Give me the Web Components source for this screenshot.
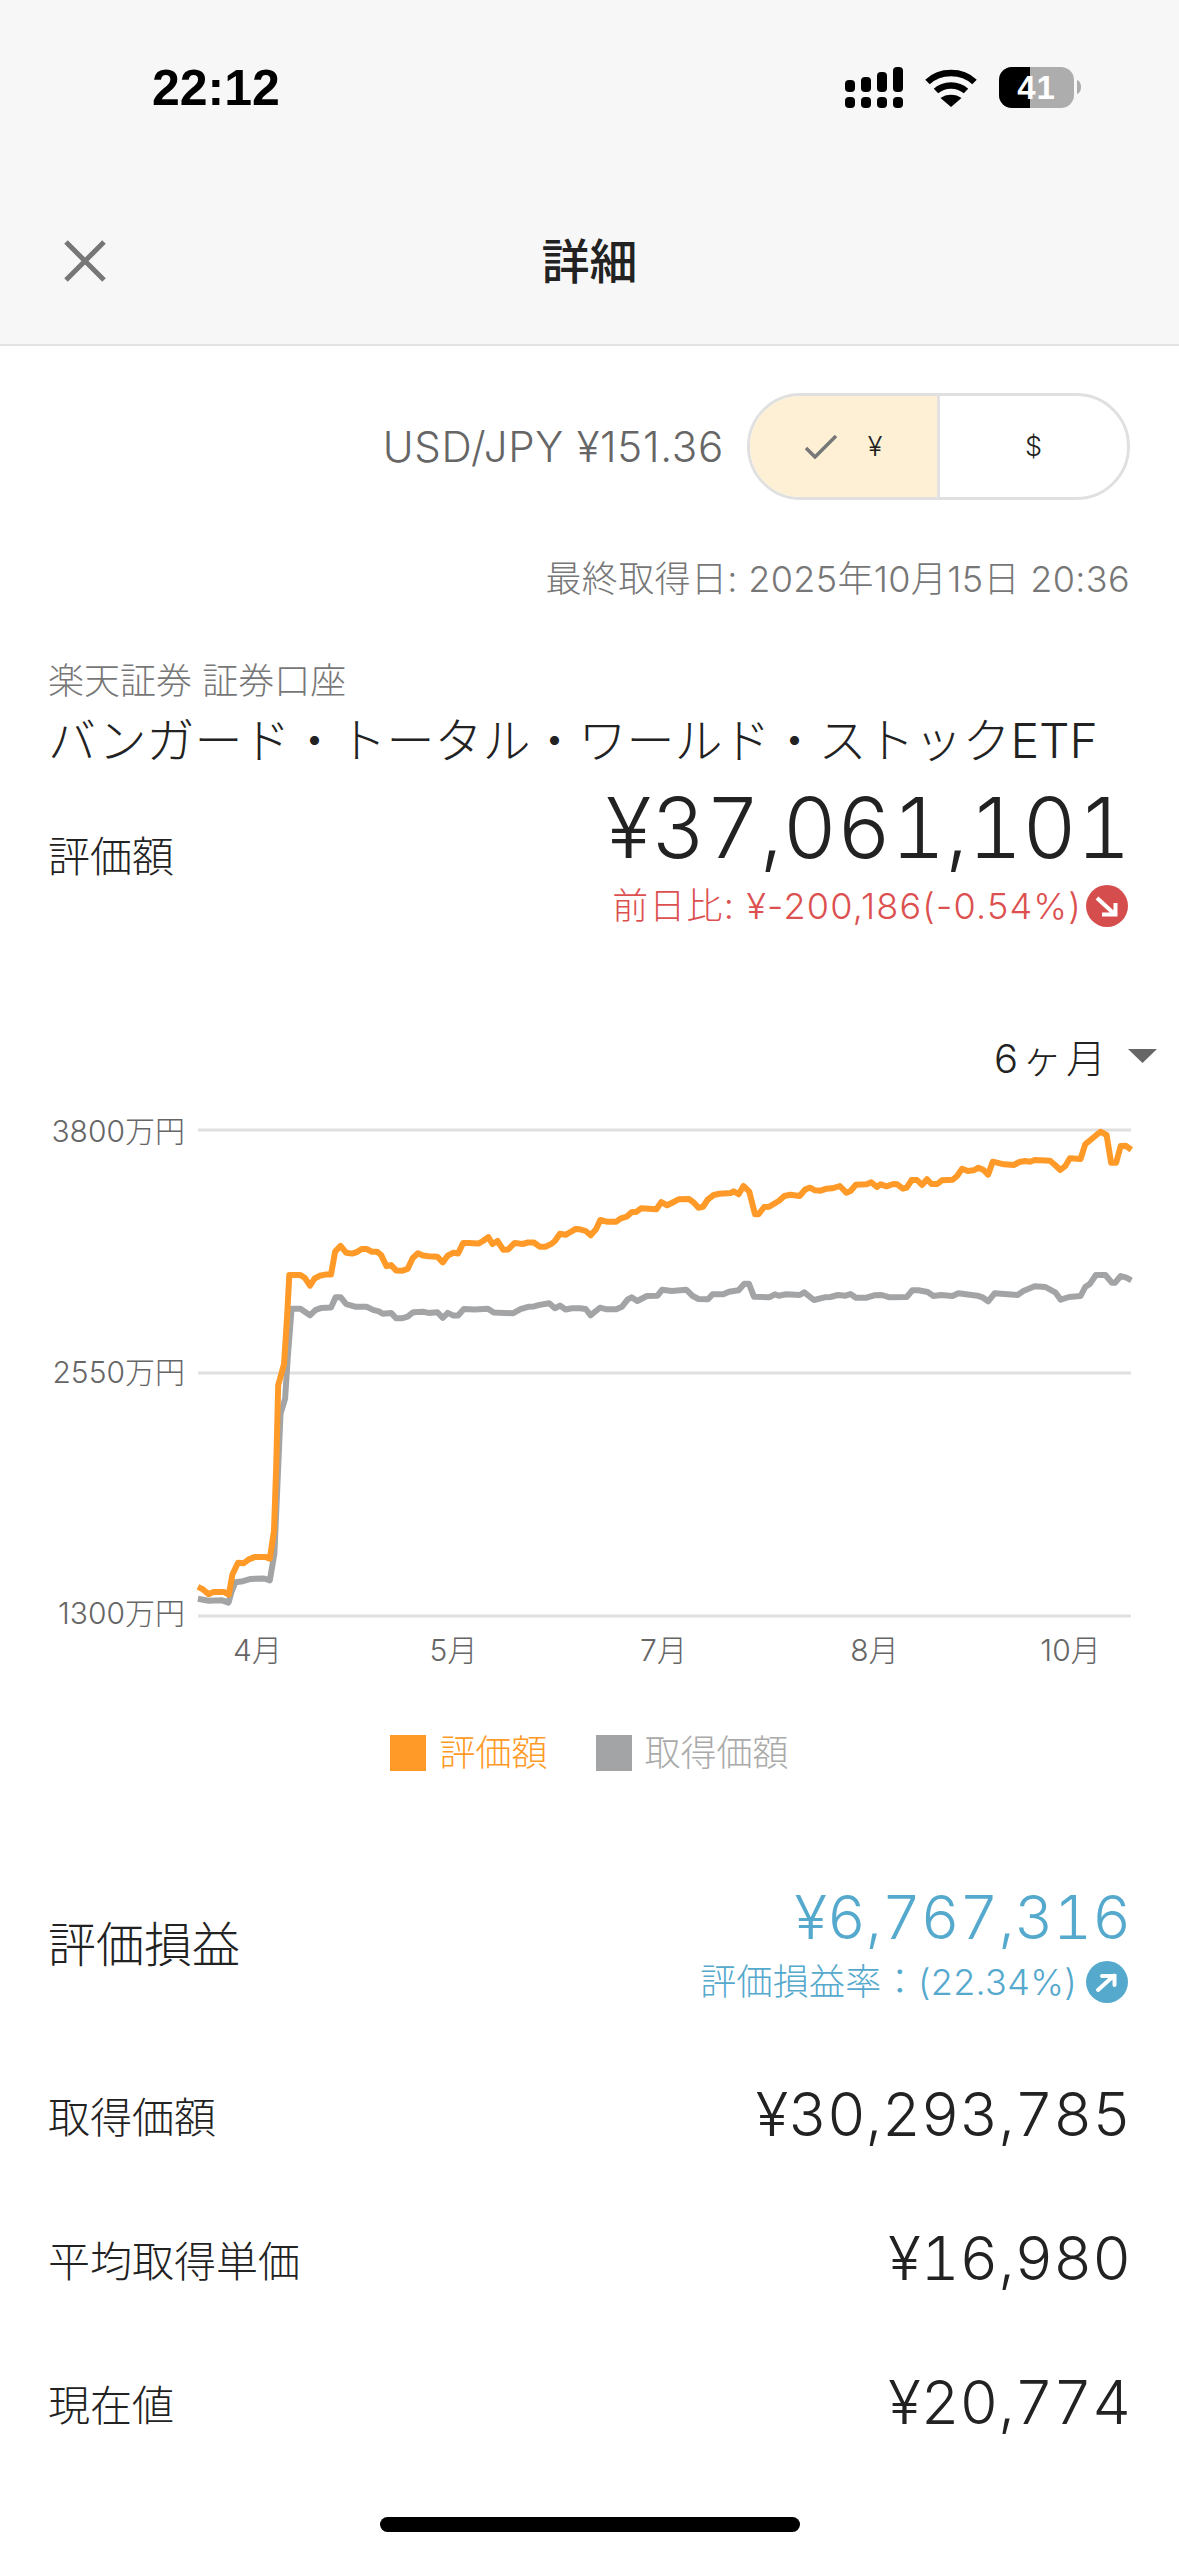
<!DOCTYPE html>
<html lang="ja">
<head>
<meta charset="UTF-8">
<title>詳細</title>
<style>
  html, body { margin: 0; background: #fff; }
  body { width: 1179px; height: 2556px; overflow: hidden; font-family: Inter, "Noto Sans CJK JP", sans-serif; color: #222; }
  app-screen { display: flex; flex-direction: column; height: 2556px; }
</style>
</head>
<body>
<app-screen>
  <status-bar></status-bar>
  <nav-header>詳細</nav-header>
  <rate-bar></rate-bar>
  <holding-head></holding-head>
  <price-chart></price-chart>
  <detail-row label="評価損益" value="¥6,767,316" kind="gain"></detail-row>
  <detail-row label="取得価額" value="¥30,293,785"></detail-row>
  <detail-row label="平均取得単価" value="¥16,980"></detail-row>
  <detail-row label="現在値" value="¥20,774"></detail-row>
  <home-bar></home-bar>
</app-screen>

<script>
  const JP = 'Inter, "Noto Sans CJK JP", sans-serif';

  class StatusBar extends HTMLElement {
    constructor() {
      super();
      this.attachShadow({ mode: 'open' });
      this.shadowRoot.innerHTML = `
        <style>
          :host { display: flex; height: 198px; background: #f7f7f7; box-sizing: border-box; padding: 67px 98px 0 152px; justify-content: space-between; align-items: flex-start; font-family: "Liberation Sans", sans-serif; }
          .time { font-size: 50px; font-weight: 700; line-height: 43px; color: #000; }
          .icons { display: flex; align-items: flex-start; gap: 22px; }
          svg { display: block; }
          .batt { position: relative; width: 82px; height: 41px; }
          .batt span { position: absolute; left: 0; width: 75px; top: 0; line-height: 42px; text-align: center; color: #fff; font-size: 33px; font-weight: 700; letter-spacing: 1px; }
        </style>
        <div class="time">22:12</div>
        <div class="icons">
          <svg width="58" height="41" viewBox="0 0 58 41" fill="#000">
            <rect x="0" y="13" width="10" height="12" rx="4"/><rect x="16" y="10" width="10" height="15" rx="4"/><rect x="32" y="5" width="10" height="20" rx="4"/><rect x="48" y="0" width="10" height="25" rx="4"/>
            <rect x="0" y="30" width="10" height="11" rx="4"/><rect x="16" y="30" width="10" height="11" rx="4"/><rect x="32" y="30" width="10" height="11" rx="4"/><rect x="48" y="30" width="10" height="11" rx="4"/>
          </svg>
          <svg width="52" height="41" viewBox="0 0 52 41" fill="none" stroke="#000" stroke-width="6.5">
            <path d="M2.5 15 C15 3 37 3 49.5 15"/><path d="M11 24 C19 16.5 33 16.5 41 24"/>
            <path d="M15.5 31 C21 26.5 31 26.5 36.5 31 L26 40 Z" fill="#000" stroke="none"/>
          </svg>
          <div class="batt">
            <svg width="82" height="41" viewBox="0 0 82 41">
              <defs><clipPath id="b"><rect width="75" height="41" rx="13"/></clipPath></defs>
              <g clip-path="url(#b)"><rect width="75" height="41" fill="#adadad"/><rect width="31" height="41" fill="#000"/></g>
              <path d="M78 13 C81 14 82 17 82 20 C82 23 81 26 78 27 Z" fill="#adadad"/>
            </svg>
            <span>41</span>
          </div>
        </div>`;
    }
  }

  class NavHeader extends HTMLElement {
    constructor() {
      super();
      this.attachShadow({ mode: 'open' });
      this.shadowRoot.innerHTML = `
        <style>
          :host { display: grid; grid-template-columns: 1fr auto 1fr; align-items: center; height: 148px; box-sizing: border-box; background: #f7f7f7; border-bottom: 2px solid #e2e2e2; padding: 0 64px 21px 64px; }
          .t { font: 500 48px/1 "Noto Sans CJK JP", sans-serif; color: #222; margin-bottom: 6px; }
          svg { display: block; }
        </style>
        <svg width="42" height="42" viewBox="0 0 42 42" stroke="#777" stroke-width="5"><path d="M2 2 L40 40 M40 2 L2 40"/></svg>
        <div class="t"><slot></slot></div>
        <div></div>`;
    }
  }

  class RateBar extends HTMLElement {
    constructor() {
      super();
      this.attachShadow({ mode: 'open' });
      this.shadowRoot.innerHTML = `
        <style>
          :host { display: flex; flex-direction: column; align-items: flex-end; padding: 47px 49px 0 0; font-family: ${JP}; }
          .top { display: flex; align-items: center; gap: 23px; }
          .rate { font-size: 42px; letter-spacing: .75px; color: #666; font-weight: 300; }
          .toggle { display: grid; grid-template-columns: 190px 1fr; width: 383px; height: 107px; box-sizing: border-box; border: 3px solid #e0e0e0; border-radius: 54px; overflow: hidden; }
          .on { background: #fdf0d5; border-right: 3px solid #e2e2e2; display: flex; align-items: center; justify-content: center; gap: 31px; }
          .off { display: flex; align-items: center; justify-content: center; }
          .cur { font-size: 27px; color: #222; font-weight: 300; }
          .date { margin-top: 58px; font-size: 36px; letter-spacing: .35px; line-height: 42px; color: #777; font-weight: 300; }
        </style>
        <div class="top">
          <div class="rate">USD/JPY ¥151.36</div>
          <div class="toggle">
            <div class="on">
              <svg width="32" height="24" viewBox="0 0 32 24" fill="none" stroke="#777" stroke-width="3.5"><path d="M1 13 L10 22 L31 1"/></svg>
              <span class="cur">¥</span>
            </div>
            <div class="off"><span class="cur">$</span></div>
          </div>
        </div>
        <div class="date">最終取得日: 2025年10月15日 20:36</div>`;
    }
  }

  class HoldingHead extends HTMLElement {
    constructor() {
      super();
      this.attachShadow({ mode: 'open' });
      this.shadowRoot.innerHTML = `
        <style>
          :host { display: block; padding: 60px 49px 0 48px; font-family: ${JP}; }
          .broker { font-size: 36px; line-height: 42px; color: #777; font-weight: 300; }
          .name { font-size: 48px; line-height: 56px; margin-top: 11px; color: #222; font-weight: 300; white-space: nowrap; }
          .val { display: flex; justify-content: space-between; align-items: flex-start; margin-top: 13px; }
          .lab { font-size: 42px; line-height: 50px; font-weight: 300; margin-top: 50px; }
          .amt { font-size: 83.6px; line-height: 92px; font-weight: 300; letter-spacing: .2px; margin-right: -1px; font-variant-numeric: tabular-nums; }
          .diff { display: flex; justify-content: flex-end; align-items: center; gap: 4px; margin-right: 2px; color: #dc5050; font-size: 36px; letter-spacing: 1.2px; line-height: 42px; font-weight: 300; margin-top: 3px; }
          .dot { width: 42px; height: 42px; border-radius: 50%; background: #d64d4d; display: block; }
          svg { display: block; }
        </style>
        <div class="broker">楽天証券 証券口座</div>
        <div class="name">バンガード・トータル・ワールド・ストックETF</div>
        <div class="val"><div class="lab">評価額</div><div class="amt">¥37,061,101</div></div>
        <div class="diff"><span>前日比: ¥-200,186(-0.54%)</span><span class="dot">
          <svg width="42" height="42" viewBox="0 0 42 42" fill="none" stroke="#fff" stroke-width="4"><path d="M11 13 L29 29.5 M16 29.5 H29.5 V18"/></svg></span></div>`;
    }
  }

  // points read off the reference, left part and right part
  const toLeft = (x, y) => [x / 2.613, 1080 + y / 2.613];
  const toRight = (x, y) => [580 + x / 2.617, 1100 + y / 3];
  const orangeL = [[517,1322],[530,1328],[545,1341],[558,1335],[585,1335],[598,1342],[607,1290],[622,1259],[637,1260],[650,1250],[665,1244],[695,1244],[705,1248],[716,1175],[722,1000],[727,795],[742,740],[750,620],[756,507],[785,507],[797,515],[810,535],[822,516],[835,509],[850,506],[865,506],[876,445],[890,431],[905,449],[920,451],[932,447],[945,439],[958,439],[972,446],[985,446],[996,455],[1010,484],[1022,481],[1035,495],[1050,496],[1065,491],[1078,463],[1092,450],[1105,456],[1120,458],[1143,459],[1157,474],[1170,456],[1185,449],[1197,451],[1210,423],[1225,423],[1250,425],[1262,418],[1276,408],[1287,426],[1300,418],[1315,441],[1328,440],[1345,423],[1365,426],[1380,422],[1395,422],[1410,433],[1425,433],[1442,425],[1450,418],[1463,399],[1478,402],[1490,395],[1503,387]];
  const orangeR = [[0,385],[15,390],[28,403],[42,385],[53,357],[70,362],[95,362],[107,352],[122,347],[135,334],[148,332],[160,322],[200,325],[213,303],[228,313],[240,306],[258,295],[285,294],[298,305],[310,320],[322,317],[335,295],[350,282],[365,278],[395,276],[402,271],[415,280],[428,255],[443,272],[458,340],[467,340],[482,318],[495,317],[508,308],[520,300],[535,285],[550,281],[575,285],[590,265],[602,260],[615,268],[630,269],[645,263],[660,262],[680,255],[697,275],[708,270],[722,251],[750,250],[762,244],[777,258],[787,250],[802,256],[820,249],[830,250],[845,263],[855,260],[868,237],[882,237],[895,252],[908,235],[920,249],[935,249],[947,238],[975,236],[987,225],[1000,203],[1015,210],[1030,208],[1043,200],[1056,207],[1068,221],[1080,182],[1110,190],[1135,192],[1150,183],[1165,180],[1178,182],[1190,177],[1230,179],[1243,192],[1257,207],[1270,195],[1282,172],[1310,174],[1322,130],[1335,118],[1362,92],[1378,102],[1390,185],[1403,185],[1415,135],[1428,134],[1443,146]];
  const greyL = [[517,1353],[545,1358],[580,1357],[597,1363],[605,1335],[615,1310],[635,1307],[655,1301],[690,1300],[705,1305],[717,1235],[725,1050],[733,870],[745,830],[752,720],[762,595],[785,595],[810,612],[825,598],[840,593],[865,592],[877,565],[890,565],[905,583],[930,590],[958,590],[975,598],[990,602],[1000,608],[1022,606],[1035,620],[1050,620],[1065,616],[1080,604],[1105,603],[1120,606],[1143,604],[1157,619],[1170,606],[1185,613],[1197,613],[1212,596],[1240,597],[1275,595],[1290,605],[1340,607],[1360,596],[1380,590],[1395,589],[1410,585],[1435,581],[1450,594],[1463,587],[1478,597],[1495,594]];
  const greyR = [[0,622],[15,624],[28,643],[52,620],[70,625],[95,625],[110,617],[125,595],[135,589],[150,600],[175,585],[203,584],[215,566],[240,570],[278,566],[295,585],[310,594],[335,595],[347,580],[375,580],[390,572],[415,568],[430,548],[442,548],[455,587],[495,589],[510,580],[520,584],[540,580],[575,582],[587,574],[612,597],[640,589],[655,588],[675,582],[695,584],[708,579],[722,590],[750,590],[770,583],[790,582],[810,589],[855,588],[870,568],[885,568],[910,573],[925,585],[945,582],[975,585],[990,577],[1040,584],[1055,590],[1068,601],[1085,577],[1145,582],[1160,570],[1190,556],[1218,558],[1245,575],[1258,596],[1280,588],[1310,585],[1322,558],[1335,548],[1350,522],[1375,522],[1392,545],[1400,545],[1415,525],[1430,530],[1443,538]];

  // svg origin sits at page y 1090
  const pts = (l, r) => l.map(p => toLeft(p[0], p[1])).concat(r.map(p => toRight(p[0], p[1])))
    .map(p => p[0].toFixed(1) + ',' + (p[1] - 1090).toFixed(1)).join(' ');

  class PriceChart extends HTMLElement {
    constructor() {
      super();
      this.attachShadow({ mode: 'open' });
      const yLabels = [['3800万円', 42], ['2550万円', 283], ['1300万円', 524]];
      const grid = [39, 282, 525];
      const xLabels = [['4月', 257.5], ['5月', 453.5], ['7月', 663.5], ['8月', 874.5], ['10月', 1070.5]];
      this.shadowRoot.innerHTML = `
        <style>
          :host { display: block; font-family: ${JP}; }
          .range { display: flex; justify-content: flex-end; align-items: center; gap: 18px; padding: 108px 22px 0 0; height: 42px; font-size: 40px; letter-spacing: 4px; font-weight: 300; }
          svg.chart { display: block; margin-top: 14px; }
          svg.chart text { font-size: 30px; font-weight: 300; fill: #666; }
          .legend { display: flex; justify-content: center; gap: 48px; margin-top: 54px; font-size: 36px; font-weight: 300; line-height: 36px; }
          .item { display: flex; align-items: center; gap: 13px; }
          .sw { width: 36px; height: 36px; }
        </style>
        <div class="range"><span>6ヶ月</span>
          <svg width="29" height="14" viewBox="0 0 29 14"><path d="M0 0 H29 L14.5 14 Z" fill="#666"/></svg></div>
        <svg class="chart" width="1179" height="590" viewBox="0 0 1179 590">
          ${grid.map(y => `<rect x="198" y="${y - 1.5}" width="933" height="3" fill="#e0e0e0"/>`).join('')}
          ${yLabels.map(l => `<text x="185" y="${l[1] + 9}" text-anchor="end">${l[0]}</text>`).join('')}
          ${xLabels.map(l => `<text x="${l[1]}" y="570" text-anchor="middle">${l[0]}</text>`).join('')}
          <polyline points="${pts(greyL, greyR)}" fill="none" stroke="#a3a4a6" stroke-width="6" stroke-linejoin="round"/>
          <polyline points="${pts(orangeL, orangeR)}" fill="none" stroke="#ff9a28" stroke-width="6" stroke-linejoin="round"/>
        </svg>
        <div class="legend">
          <div class="item" style="color:#ff9a28"><span class="sw" style="background:#ff9a28"></span>評価額</div>
          <div class="item" style="color:#aaa"><span class="sw" style="background:#a3a4a6"></span>取得価額</div>
        </div>`;
    }
  }

  class DetailRow extends HTMLElement {
    constructor() {
      super();
      this.attachShadow({ mode: 'open' });
      const gain = this.getAttribute('kind') === 'gain';
      this.shadowRoot.innerHTML = `
        <style>
          :host { display: flex; justify-content: space-between; align-items: center; height: 144px; padding: 0 49px 0 48px; font-family: ${JP}; font-weight: 300; }
          :host([kind="gain"]) { height: 202px; margin-top: 69px; }
          .lab { font-size: 42px; }
          :host([kind="gain"]) .lab { font-size: 48px; }
          .right { display: flex; flex-direction: column; align-items: flex-end; }
          :host([kind="gain"]) .right { padding-top: 5px; }
          .val { font-size: 60px; line-height: 66px; margin-right: -1px; font-variant-numeric: tabular-nums; }
          :host([kind="gain"]) .val { color: #55a9cd; }
          .sub { display: flex; align-items: center; gap: 9px; margin: 10px 2px 0 0; color: #55a9cd; font-size: 36px; letter-spacing: .3px; line-height: 44px; }
          .dot { width: 42px; height: 42px; border-radius: 50%; background: #55a9cd; display: block; }
          svg { display: block; }
        </style>
        <div class="lab">${this.getAttribute('label')}</div>
        <div class="right">
          <div class="val">${this.getAttribute('value')}</div>
          ${gain ? `<div class="sub"><span>評価損益率：(22.34%)</span><span class="dot"><svg width="42" height="42" viewBox="0 0 42 42" fill="none" stroke="#fff" stroke-width="4" stroke-linecap="round"><path d="M12 29 L28 14.5 M16 15 H28.5 V24"/></svg></span></div>` : ''}
        </div>`;
    }
  }

  class HomeBar extends HTMLElement {
    constructor() {
      super();
      this.attachShadow({ mode: 'open' });
      this.shadowRoot.innerHTML = `
        <style>
          :host { display: flex; justify-content: center; margin-top: auto; padding-bottom: 24px; }
          div { width: 420px; height: 15px; background: #000; border-radius: 8px; }
        </style>
        <div></div>`;
    }
  }

  customElements.define('status-bar', StatusBar);
  customElements.define('nav-header', NavHeader);
  customElements.define('rate-bar', RateBar);
  customElements.define('holding-head', HoldingHead);
  customElements.define('price-chart', PriceChart);
  customElements.define('detail-row', DetailRow);
  customElements.define('home-bar', HomeBar);
</script>
</body>
</html>
